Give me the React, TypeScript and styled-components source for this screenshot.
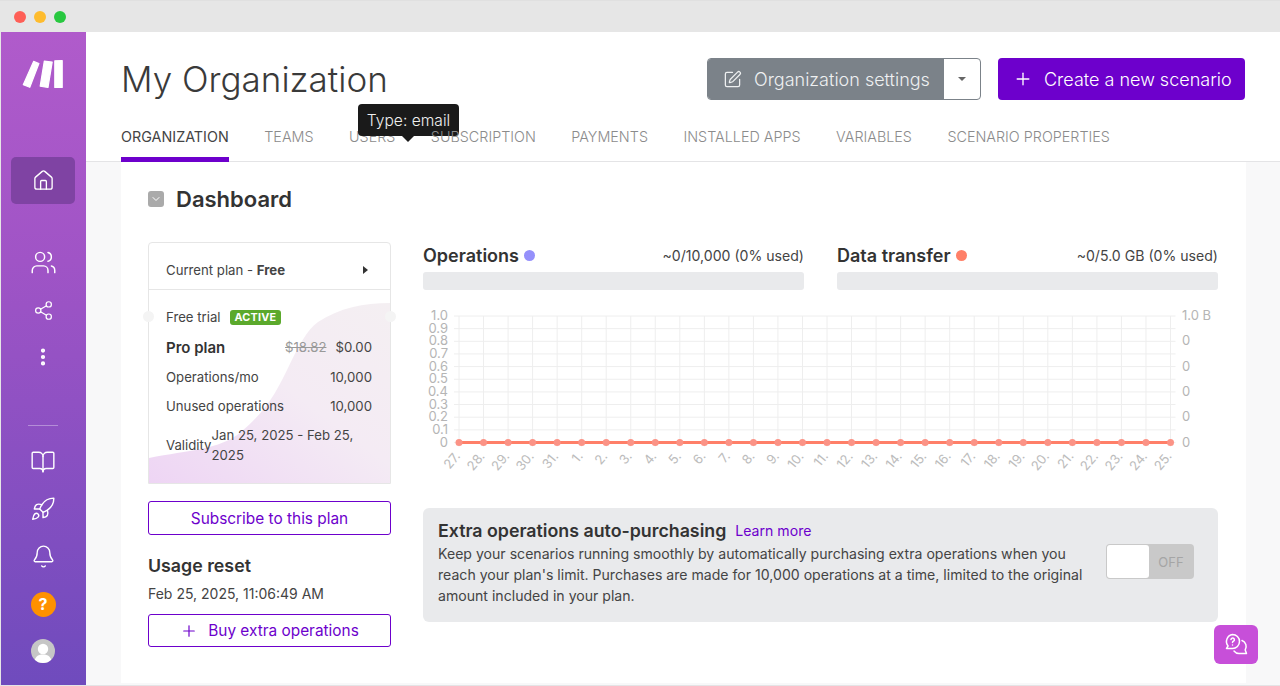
import React, { ReactElement } from 'react';
import styled, { createGlobalStyle } from 'styled-components';
import { Bell, BookOpen, ChevronDown, EllipsisVertical, House, Plus, Rocket, Share2, SquarePen, Users } from 'lucide-react';

const GlobalStyle = createGlobalStyle`
  html, body {
    margin: 0;
    padding: 0;
    height: 686px;
    overflow: hidden;
    background: #fff;
    font-family: Inter, "Liberation Sans", sans-serif;
    color: #333;
  }
  * { box-sizing: border-box; }
`;

const TABS = ['ORGANIZATION', 'TEAMS', 'USERS', 'SUBSCRIPTION', 'PAYMENTS', 'INSTALLED APPS', 'VARIABLES', 'SCENARIO PROPERTIES'];
const DAYS = [27, 28, 29, 30, 31, ...Array.from({ length: 25 }, (_, i) => i + 1)];

// 차트 좌표
const PLOT_LEFT = 36;
const PLOT_RIGHT = 747.5;
const PLOT_TOP = 11;
const PLOT_BOTTOM = 137.5;

const Chart = (): ReactElement => {
  const stepX = (PLOT_RIGHT - PLOT_LEFT) / (DAYS.length - 1);
  const stepY = (PLOT_BOTTOM - PLOT_TOP) / 10;
  const ys = Array.from({ length: 11 }, (_, i) => PLOT_TOP + i * stepY);
  const xs = DAYS.map((_, i) => PLOT_LEFT + i * stepX);

  return (
    <ChartSvg viewBox="0 0 795 180" width="795" height="180">
      {ys.map((y) => (
        <line key={y} x1={PLOT_LEFT - 5} x2={PLOT_RIGHT + 5} y1={y} y2={y} stroke="#eeeeee" />
      ))}
      {xs.map((x) => (
        <line key={x} x1={x} x2={x} y1={PLOT_TOP} y2={PLOT_BOTTOM + 4} stroke="#eeeeee" />
      ))}
      {ys.map((y, i) => (
        <text key={y} x="25" y={y + 4} textAnchor="end" fontSize="13" fill="#b5b5b5">
          {i === 10 ? '0' : ((10 - i) / 10).toFixed(1)}
        </text>
      ))}
      {[0, 2, 4, 6, 8, 10].map((i) => (
        <text key={i} x="759" y={ys[i] + 4} fontSize="13" fill="#b5b5b5">
          {i === 0 ? '1.0 B' : '0'}
        </text>
      ))}
      <line x1={PLOT_LEFT} x2={PLOT_RIGHT} y1={PLOT_BOTTOM} y2={PLOT_BOTTOM} stroke="#ff7f68" strokeWidth="3" />
      {xs.map((x) => (
        <circle key={x} cx={x} cy={PLOT_BOTTOM} r="3.5" fill="#fb9386" />
      ))}
      {DAYS.map((day, i) => (
        <text
          key={day}
          x={xs[i] + 2}
          y={PLOT_BOTTOM + 14}
          textAnchor="end"
          fontSize="13"
          fill="#bcbcbc"
          transform={`rotate(-50 ${xs[i] + 2} ${PLOT_BOTTOM + 14})`}
        >
          {day}.
        </text>
      ))}
    </ChartSvg>
  );
};

const Logo = (): ReactElement => (
  <svg width="42" height="30" viewBox="22 59 42 30" fill="#fff" stroke="#fff" strokeWidth="1.2" strokeLinejoin="round">
    <polygon points="33.6,61.4 38.9,63.5 29.8,87.3 23.3,84.8" />
    <polygon points="44.3,61.2 52.2,62 48,87.5 40.2,86.2" />
    <polygon points="54.8,60.8 62.2,60.6 62.2,87.5 54.8,87.5" />
  </svg>
);

const ChatIcon = (): ReactElement => (
  <svg width="26" height="26" viewBox="0 0 26 26" fill="none" stroke="#fff" strokeWidth="1.5" strokeLinecap="round" strokeLinejoin="round">
    <path d="M9.5 2.5a7 7 0 0 1 7 7 7 7 0 0 1-7 7H3.5l1.6-2.6A7 7 0 0 1 9.5 2.5z" />
    <path d="M19 8.5a6.5 6.5 0 0 1 3.2 9.5l1.3 3.5H16a6.5 6.5 0 0 1-5-2.5" />
    <path d="M8 7.5a1.7 1.7 0 1 1 2.4 1.7c-.6.3-.9.7-.9 1.3" />
    <path d="M9.5 13v.1" />
  </svg>
);

const App = (): ReactElement => (
  <>
    <GlobalStyle />
    <Frame>
      <TitleBar>
        <Light color="#fe5f57" />
        <Light color="#febc2e" />
        <Light color="#28c840" />
      </TitleBar>
      <Body>
        <Sidebar>
          <LogoSlot>
            <Logo />
          </LogoSlot>
          <HomeItem>
            <House size={23} strokeWidth={1.4} />
          </HomeItem>
          <NavGroup>
            <NavIcon>
              <Users size={27} strokeWidth={1.3} />
            </NavIcon>
            <NavIcon>
              <Share2 size={21} strokeWidth={1.4} />
            </NavIcon>
            <NavIcon>
              <EllipsisVertical size={22} strokeWidth={2.6} />
            </NavIcon>
          </NavGroup>
          <NavDivider />
          <NavGroup>
            <NavIcon>
              <BookOpen size={26} strokeWidth={1.3} />
            </NavIcon>
            <NavIcon>
              <Rocket size={26} strokeWidth={1.3} />
            </NavIcon>
            <NavIcon>
              <Bell size={25} strokeWidth={1.3} />
            </NavIcon>
            <NavIcon>
              <HelpDot>?</HelpDot>
            </NavIcon>
            <NavIcon>
              <Avatar>
                <svg width="24" height="24" viewBox="0 0 24 24" fill="#fff">
                  <circle cx="12" cy="10" r="5.200" />
                  <path d="M3 24c.6-6 3.800-8.500 9-8.500s8.400 2.500 9 8.500z" />
                </svg>
              </Avatar>
            </NavIcon>
          </NavGroup>
        </Sidebar>
        <Main>
          <Header>
            <HeaderTop>
              <PageTitle>My Organization</PageTitle>
              <HeaderActions>
                <SplitButton>
                  <SplitLabel>
                    <SquarePen size={19} strokeWidth={1.6} />
                    Organization settings
                  </SplitLabel>
                  <SplitCaret />
                </SplitButton>
                <PrimaryButton>
                  <Plus size={20} strokeWidth={1.6} />
                  Create a new scenario
                </PrimaryButton>
              </HeaderActions>
            </HeaderTop>
            <TabRow>
              {TABS.map((tab, i) => (
                <Tab key={tab} $active={i === 0}>
                  {tab}
                  {tab === 'USERS' && (
                    <Tooltip>
                      Type: email
                    </Tooltip>
                  )}
                </Tab>
              ))}
            </TabRow>
          </Header>
          <Content>
            <Card>
              <CardTitleRow>
                <Collapse>
                  <ChevronDown size={12} strokeWidth={2} color="#fff" />
                </Collapse>
                <CardTitle>Dashboard</CardTitle>
              </CardTitleRow>
              <Columns>
                <LeftColumn>
                  <PlanBox>
                    <PlanWave viewBox="0 0 241 193" preserveAspectRatio="none">
                      <defs>
                        <linearGradient id="wave" x1="0" y1="1" x2="1" y2="0">
                          <stop offset="0" stopColor="#eed5f4" />
                          <stop offset="0.55" stopColor="#f4ebf4" />
                          <stop offset="1" stopColor="#f4eff2" />
                        </linearGradient>
                      </defs>
                      <path d="M0 168C40 160 70 160 92 142C120 118 128 100 139 78C150 55 158 40 169 32C190 18 215 13 241 13V193H0Z" fill="url(#wave)" />
                    </PlanWave>
                    <PlanHeader>
                      <span>
                        Current plan - <b>Free</b>
                      </span>
                      <Arrow />
                    </PlanHeader>
                    <Notch $side="left" />
                    <Notch $side="right" />
                    <PlanBody>
                      <TrialRow>
                        Free trial
                        <ActiveBadge>ACTIVE</ActiveBadge>
                      </TrialRow>
                      <ProRow>
                        <ProName>Pro plan</ProName>
                        <Prices>
                          <OldPrice>$18.82</OldPrice>
                          <span>$0.00</span>
                        </Prices>
                      </ProRow>
                      <PlanRow>
                        <span>Operations/mo</span>
                        <span>10,000</span>
                      </PlanRow>
                      <PlanRow>
                        <span>Unused operations</span>
                        <span>10,000</span>
                      </PlanRow>
                      <ValidityRow>
                        <span>Validity</span>
                        <span>Jan 25, 2025 - Feb 25, 2025</span>
                      </ValidityRow>
                    </PlanBody>
                  </PlanBox>
                  <OutlineButton>Subscribe to this plan</OutlineButton>
                  <UsageTitle>Usage reset</UsageTitle>
                  <UsageDate>Feb 25, 2025, 11:06:49 AM</UsageDate>
                  <OutlineButton $short>
                    <Plus size={18} strokeWidth={1.6} />
                    Buy extra operations
                  </OutlineButton>
                </LeftColumn>
                <RightColumn>
                  <Meters>
                    <Meter>
                      <MeterHead>
                        <MeterName>
                          Operations
                          <Dot color="#9590fb" />
                        </MeterName>
                        <MeterValue>~0/10,000 (0% used)</MeterValue>
                      </MeterHead>
                      <MeterBar />
                    </Meter>
                    <Meter>
                      <MeterHead>
                        <MeterName>
                          Data transfer
                          <Dot color="#ff8068" />
                        </MeterName>
                        <MeterValue>~0/5.0 GB (0% used)</MeterValue>
                      </MeterHead>
                      <MeterBar />
                    </Meter>
                  </Meters>
                  <Chart />
                  <AutoBox>
                    <AutoText>
                      <AutoHead>
                        <AutoTitle>Extra operations auto-purchasing</AutoTitle>
                        <LearnMore>Learn more</LearnMore>
                      </AutoHead>
                      <AutoCopy>
                        Keep your scenarios running smoothly by automatically purchasing extra operations when you reach your plan&apos;s limit. Purchases are made for 10,000 operations at a time, limited to the original amount included in your plan.
                      </AutoCopy>
                    </AutoText>
                    <Toggle>
                      <ToggleThumb />
                      <ToggleLabel>OFF</ToggleLabel>
                    </Toggle>
                  </AutoBox>
                </RightColumn>
              </Columns>
            </Card>
          </Content>
        </Main>
      </Body>
      <ChatButton>
        <ChatIcon />
      </ChatButton>
    </Frame>
  </>
);

const Frame = styled.div`
  position: relative;
  width: 1280px;
  height: 686px;
  display: flex;
  flex-direction: column;
  overflow: hidden;
  border-bottom: 1px solid #e4e4e6;
`;

const TitleBar = styled.div`
  height: 32px;
  flex: none;
  padding: 0 0 0 14px;
  display: flex;
  align-items: center;
  gap: 8px;
  background: #e6e6e6;
  border-top: 1px solid #e0e0e0;
`;

const Light = styled.span<{ color: string }>`
  width: 12px;
  height: 12px;
  border-radius: 50%;
  background: ${({ color }) => color};
`;

const Body = styled.div`
  flex: 1;
  min-height: 0;
  display: flex;
  padding-left: 1px;
  background: #e6e6e6;
`;

const Sidebar = styled.nav`
  width: 85px;
  flex: none;
  padding-right: 1px;
  display: flex;
  flex-direction: column;
  align-items: center;
  background: linear-gradient(180deg, #b05bcb 0%, #a054c6 35%, #6f4bbd 100%);
  color: #fff;
`;

const LogoSlot = styled.div`
  height: 125px;
  flex: none;
  padding-top: 27px;
`;

const HomeItem = styled.div`
  width: 64px;
  height: 47px;
  flex: none;
  display: flex;
  align-items: center;
  justify-content: center;
  background: #7f43a3;
  border-radius: 5px;
`;

const NavGroup = styled.div`
  margin-top: 35px;
  display: flex;
  flex-direction: column;
  align-items: center;
  &:last-child {
    margin-top: 12px;
  }
`;

const NavIcon = styled.div`
  width: 48px;
  height: 47.400px;
  display: flex;
  align-items: center;
  justify-content: center;
`;

const NavDivider = styled.div`
  width: 30px;
  height: 1px;
  margin-top: 44px;
  background: rgba(255, 255, 255, 0.35);
`;

const HelpDot = styled.span`
  width: 25px;
  height: 25px;
  display: flex;
  align-items: center;
  justify-content: center;
  border-radius: 50%;
  background: #ff9100;
  color: #fff;
  font-size: 16px;
  font-weight: 700;
`;

const Avatar = styled.span`
  width: 24px;
  height: 24px;
  border-radius: 50%;
  overflow: hidden;
  background: #c6c6c6;
  display: flex;
`;

const Main = styled.main`
  flex: 1;
  min-width: 0;
  display: flex;
  flex-direction: column;
  background: #f8f8f9;
`;

const Header = styled.header`
  height: 130px;
  flex: none;
  padding: 26px 35px 0 35px;
  display: flex;
  flex-direction: column;
  justify-content: space-between;
  background: #fff;
  border-bottom: 1px solid #e4e4e6;
`;

const HeaderTop = styled.div`
  display: flex;
  align-items: center;
  justify-content: space-between;
`;

const PageTitle = styled.h1`
  margin: 0;
  font-size: 35px;
  line-height: 42px;
  font-weight: 300;
  color: #3a3a3a;
`;

const HeaderActions = styled.div`
  display: flex;
  gap: 17px;
`;

const SplitButton = styled.div`
  width: 274px;
  height: 42px;
  display: flex;
  overflow: hidden;
  border: 1px solid #7b8289;
  border-radius: 4px;
  background: #fff;
`;

const SplitLabel = styled.div`
  width: 236px;
  display: flex;
  align-items: center;
  gap: 12px;
  padding-left: 15px;
  background: #7b8289;
  color: #eef0f1;
  font-size: 18px;
  font-weight: 300;
  white-space: nowrap;
`;

const SplitCaret = styled.div`
  flex: 1;
  display: flex;
  align-items: center;
  justify-content: center;
  &::after {
    content: '';
    border-left: 4px solid transparent;
    border-right: 4px solid transparent;
    border-top: 4px solid #666;
  }
`;

const PrimaryButton = styled.button`
  width: 247px;
  height: 42px;
  padding: 0 0 0 15px;
  display: flex;
  align-items: center;
  gap: 11px;
  border: 0;
  border-radius: 4px;
  background: #6d00cc;
  color: #fff;
  font-family: inherit;
  font-size: 18px;
  font-weight: 300;
  white-space: nowrap;
`;

const TabRow = styled.div`
  display: flex;
  gap: 35.500px;
`;

const Tab = styled.div<{ $active: boolean }>`
  position: relative;
  height: 41px;
  padding-top: 7px;
  font-size: 14.350px;
  line-height: 17px;
  white-space: nowrap;
  color: ${({ $active }) => ($active ? '#444' : '#8b8b8b')};
  font-weight: ${({ $active }) => ($active ? 400 : 300)};
  border-bottom: 5px solid ${({ $active }) => ($active ? '#6d00cc' : 'transparent')};
  margin-bottom: -1px;
`;

const Tooltip = styled.div`
  position: absolute;
  left: 9px;
  top: -17px;
  width: 101px;
  height: 32px;
  display: flex;
  align-items: center;
  justify-content: center;
  border-radius: 4px;
  background: #1a1a1a;
  color: #f0f0f0;
  font-size: 15.600px;
  font-weight: 300;
  &::after {
    content: '';
    position: absolute;
    top: 100%;
    left: 44px;
    border-left: 6px solid transparent;
    border-right: 6px solid transparent;
    border-top: 6px solid #1a1a1a;
  }
`;

const Content = styled.div`
  flex: 1;
  min-height: 0;
  padding: 0 34px 0 35px;
`;

const Card = styled.section`
  height: 521px;
  padding: 0 28px 0 27px;
  background: #fff;
`;

const CardTitleRow = styled.div`
  height: 74px;
  margin-bottom: 6px;
  display: flex;
  align-items: center;
  gap: 12px;
`;

const Collapse = styled.span`
  width: 16px;
  height: 16px;
  display: flex;
  align-items: center;
  justify-content: center;
  border-radius: 3px;
  background: #aaaaaa;
`;

const CardTitle = styled.h2`
  margin: 0;
  font-size: 22px;
  font-weight: 600;
  color: #333;
`;

const Columns = styled.div`
  display: flex;
  gap: 32px;
`;

const LeftColumn = styled.div`
  width: 243px;
  flex: none;
`;

const PlanBox = styled.div`
  position: relative;
  height: 242px;
  margin-bottom: 17px;
  border: 1px solid #e6e6e6;
  border-radius: 4px 4px 0 0;
  font-size: 13.200px;
  color: #444;
`;

const PlanWave = styled.svg`
  position: absolute;
  left: 0;
  bottom: 0;
  width: 100%;
  height: 193px;
`;

const PlanHeader = styled.div`
  position: relative;
  height: 47px;
  padding: 8px 22px 0 17px;
  display: flex;
  align-items: center;
  justify-content: space-between;
  border-bottom: 1px solid #e6e6e6;
  font-weight: 400;
`;

const Arrow = styled.span`
  border-top: 4px solid transparent;
  border-bottom: 4px solid transparent;
  border-left: 5px solid #333;
`;

const Notch = styled.span<{ $side: 'left' | 'right' }>`
  position: absolute;
  top: 68px;
  ${({ $side }) => $side}: -6px;
  width: 11px;
  height: 11px;
  border-radius: 50%;
  background: #f4f4f4;
`;

const PlanBody = styled.div`
  position: relative;
  padding: 18px 18px 0 17px;
`;

const TrialRow = styled.div`
  height: 18px;
  display: flex;
  align-items: center;
  gap: 9px;
`;

const ActiveBadge = styled.span`
  height: 15px;
  padding: 0 5px;
  display: flex;
  align-items: center;
  border-radius: 3px;
  background: #5ba92c;
  color: #fff;
  font-size: 10.800px;
  font-weight: 700;
  letter-spacing: 0.2px;
`;

const ProRow = styled.div`
  height: 20px;
  margin-top: 11px;
  display: flex;
  align-items: center;
  justify-content: space-between;
`;

const ProName = styled.span`
  font-size: 15px;
  font-weight: 600;
  color: #333;
`;

const Prices = styled.span`
  display: flex;
  gap: 9px;
`;

const OldPrice = styled.span`
  color: #999;
  text-decoration: line-through;
`;

const PlanRow = styled.div`
  height: 18px;
  margin-top: 11px;
  display: flex;
  align-items: center;
  justify-content: space-between;
`;

const ValidityRow = styled.div`
  margin-top: 10px;
  display: flex;
  align-items: center;
  line-height: 20px;
`;

const OutlineButton = styled.button<{ $short?: boolean }>`
  width: 100%;
  height: ${({ $short }) => ($short ? '33px' : '34px')};
  display: flex;
  align-items: center;
  justify-content: center;
  gap: 10px;
  border: 1px solid #6d00cc;
  border-radius: 3px;
  background: #fff;
  color: #6d00cc;
  font-family: inherit;
  font-size: 15.400px;
  font-weight: 400;
`;

const UsageTitle = styled.h3`
  margin: 21px 0 0;
  font-size: 17.800px;
  line-height: 20px;
  font-weight: 600;
  color: #333;
`;

const UsageDate = styled.div`
  margin: 9px 0 11px;
  font-size: 14px;
  line-height: 18px;
  color: #444;
`;

const RightColumn = styled.div`
  width: 795px;
  flex: none;
`;

const Meters = styled.div`
  display: grid;
  grid-template-columns: 381px 381px;
  gap: 33px;
`;

const Meter = styled.div`
  display: flex;
  flex-direction: column;
  gap: 4px;
`;

const MeterHead = styled.div`
  height: 26px;
  padding-top: 1px;
  display: flex;
  align-items: center;
  justify-content: space-between;
`;

const MeterName = styled.div`
  display: flex;
  align-items: center;
  gap: 5px;
  font-size: 18px;
  font-weight: 600;
  color: #333;
`;

const Dot = styled.span<{ color: string }>`
  width: 11px;
  height: 11px;
  border-radius: 50%;
  background: ${({ color }) => color};
`;

const MeterValue = styled.span`
  font-size: 14.100px;
  color: #444;
`;

const MeterBar = styled.div`
  height: 18px;
  border-radius: 3px;
  background: #e9eaec;
`;

const ChartSvg = styled.svg`
  display: block;
  margin-top: 15px;
  font-family: Inter, "Liberation Sans", sans-serif;
`;

const AutoBox = styled.div`
  height: 114px;
  margin-top: 23px;
  padding: 11px 24px 0 15px;
  display: flex;
  justify-content: space-between;
  border-radius: 6px;
  background: #e9eaec;
`;

const AutoText = styled.div`
  width: 652px;
`;

const AutoHead = styled.div`
  display: flex;
  align-items: center;
  gap: 9px;
  height: 22px;
`;

const AutoTitle = styled.span`
  font-size: 17.800px;
  font-weight: 600;
  color: #333;
`;

const LearnMore = styled.a`
  font-size: 14.100px;
  color: #6d00cc;
`;

const AutoCopy = styled.p`
  margin: 2px 0 0;
  font-size: 14.100px;
  line-height: 21px;
  color: #444;
`;

const Toggle = styled.div`
  width: 88px;
  height: 35px;
  margin-top: 25px;
  display: flex;
  padding: 1px;
  border-radius: 4px;
  background: #c9c9c9;
`;

const ToggleThumb = styled.span`
  width: 42px;
  border-radius: 3px;
  background: #fff;
`;

const ToggleLabel = styled.span`
  flex: 1;
  display: flex;
  align-items: center;
  justify-content: center;
  font-size: 13px;
  color: #a5a5a5;
`;

const ChatButton = styled.div`
  position: absolute;
  left: 1214px;
  top: 625px;
  width: 44px;
  height: 39px;
  display: flex;
  align-items: center;
  justify-content: center;
  border-radius: 6px;
  background: #c74fd9;
`;

export default App;
